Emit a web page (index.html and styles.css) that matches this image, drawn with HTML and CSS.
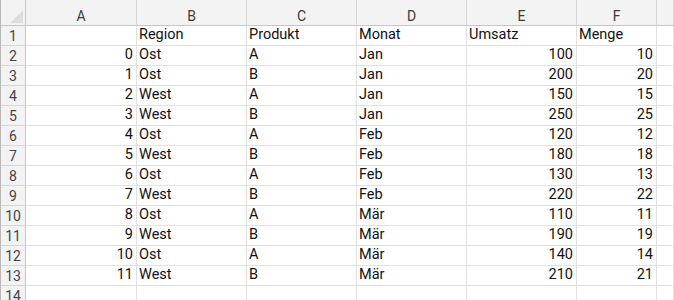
FILE: index.html
```html
<!DOCTYPE html>
<html lang="de">
<head>
<meta charset="utf-8">
<title>Tabelle</title>
<link rel="stylesheet" href="styles.css">
</head>
<body>
<div class="sheet">
  <div class="hd corner"><span class="tri"></span></div>
  <div class="hd col">A</div>
  <div class="hd col">B</div>
  <div class="hd col">C</div>
  <div class="hd col">D</div>
  <div class="hd col">E</div>
  <div class="hd col">F</div>
  <div class="hd col"></div>

  <div class="hd rn">1</div><div class="c"></div><div class="c">Region</div><div class="c">Produkt</div><div class="c">Monat</div><div class="c">Umsatz</div><div class="c">Menge</div><div class="c"></div>
  <div class="hd rn">2</div><div class="c n">0</div><div class="c">Ost</div><div class="c">A</div><div class="c">Jan</div><div class="c n">100</div><div class="c n">10</div><div class="c"></div>
  <div class="hd rn">3</div><div class="c n">1</div><div class="c">Ost</div><div class="c">B</div><div class="c">Jan</div><div class="c n">200</div><div class="c n">20</div><div class="c"></div>
  <div class="hd rn">4</div><div class="c n">2</div><div class="c">West</div><div class="c">A</div><div class="c">Jan</div><div class="c n">150</div><div class="c n">15</div><div class="c"></div>
  <div class="hd rn">5</div><div class="c n">3</div><div class="c">West</div><div class="c">B</div><div class="c">Jan</div><div class="c n">250</div><div class="c n">25</div><div class="c"></div>
  <div class="hd rn">6</div><div class="c n">4</div><div class="c">Ost</div><div class="c">A</div><div class="c">Feb</div><div class="c n">120</div><div class="c n">12</div><div class="c"></div>
  <div class="hd rn">7</div><div class="c n">5</div><div class="c">West</div><div class="c">B</div><div class="c">Feb</div><div class="c n">180</div><div class="c n">18</div><div class="c"></div>
  <div class="hd rn">8</div><div class="c n">6</div><div class="c">Ost</div><div class="c">A</div><div class="c">Feb</div><div class="c n">130</div><div class="c n">13</div><div class="c"></div>
  <div class="hd rn">9</div><div class="c n">7</div><div class="c">West</div><div class="c">B</div><div class="c">Feb</div><div class="c n">220</div><div class="c n">22</div><div class="c"></div>
  <div class="hd rn">10</div><div class="c n">8</div><div class="c">Ost</div><div class="c">A</div><div class="c">Mär</div><div class="c n">110</div><div class="c n">11</div><div class="c"></div>
  <div class="hd rn">11</div><div class="c n">9</div><div class="c">West</div><div class="c">B</div><div class="c">Mär</div><div class="c n">190</div><div class="c n">19</div><div class="c"></div>
  <div class="hd rn">12</div><div class="c n">10</div><div class="c">Ost</div><div class="c">A</div><div class="c">Mär</div><div class="c n">140</div><div class="c n">14</div><div class="c"></div>
  <div class="hd rn">13</div><div class="c n">11</div><div class="c">West</div><div class="c">B</div><div class="c">Mär</div><div class="c n">210</div><div class="c n">21</div><div class="c"></div>
  <div class="hd rn">14</div><div class="c"></div><div class="c"></div><div class="c"></div><div class="c"></div><div class="c"></div><div class="c"></div><div class="c"></div>
</div>
</body>
</html>
```

FILE: styles.css
```css
html, body {
  margin: 0;
  padding: 0;
  background: #ffffff;
  overflow: hidden;
}

.sheet {
  display: grid;
  grid-template-columns: 25px 111px 110px 110px 110px 110px 80px 1fr;
  grid-template-rows: 26px repeat(14, 20px);
  width: 674px;
  font-family: Roboto, "Liberation Sans", sans-serif;
  font-size: 14.5px;
  color: #111111;
  border-left: 1px solid #b8b8b8;
  box-sizing: border-box;
}

.hd {
  background: #f3f3f3;
  color: #3b3b3b;
  box-sizing: border-box;
  border-right: 1px solid #d6d6d6;
  border-bottom: 1px solid #d6d6d6;
  display: flex;
  justify-content: center;
}

.col {
  align-items: center;
  padding-top: 6px;
  font-size: 14px;
  border-bottom-color: #c6c6c6;
}

.corner {
  position: relative;
  border-bottom-color: #c6c6c6;
  border-right-color: #c6c6c6;
}

.tri {
  position: absolute;
  right: 2px;
  bottom: 2px;
  width: 0;
  height: 0;
  border-left: 13px solid transparent;
  border-bottom: 13px solid #dedede;
}

.rn {
  align-items: flex-end;
  padding-bottom: 1px;
  font-size: 14px;
  border-right-color: #c6c6c6;
  color: #444444;
}

.c {
  box-sizing: border-box;
  border-right: 1px solid #e1e1e1;
  border-bottom: 1px solid #e1e1e1;
  padding: 0 3px 1px 2px;
  line-height: 18px;
  display: flex;
  align-items: flex-end;
  white-space: nowrap;
  overflow: hidden;
}

.n {
  justify-content: flex-end;
}
```
